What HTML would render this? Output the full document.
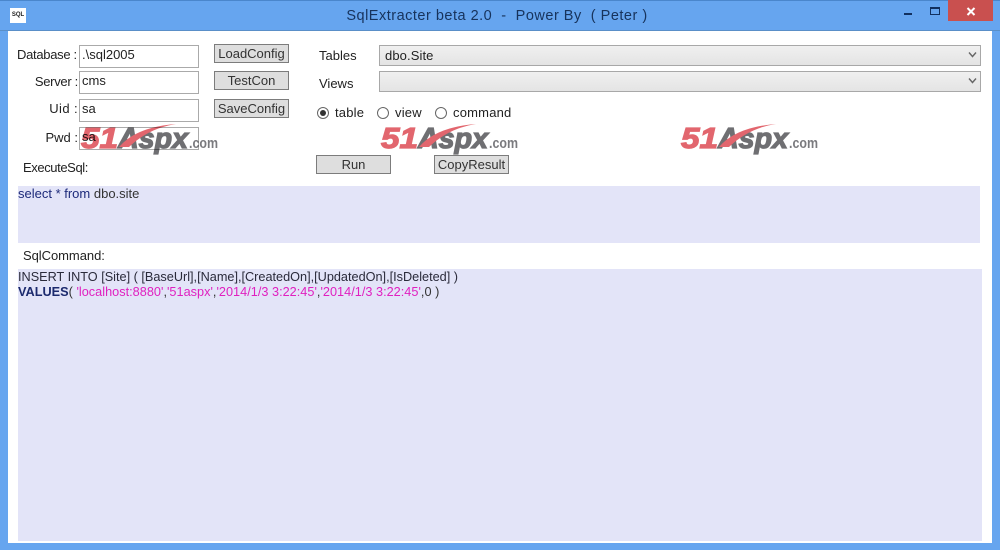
<!DOCTYPE html>
<html><head><meta charset="utf-8">
<style>
html,body{margin:0;padding:0}
body{width:1000px;height:550px;overflow:hidden;position:relative;background:#66a5ef;font-family:"Liberation Sans",sans-serif;font-size:13px;color:#222}
div,span.a{position:absolute;white-space:pre;box-sizing:border-box}
#c{left:8px;top:31px;width:984px;height:512px;background:#fff}
.l{line-height:16px;height:16px}
.r{text-align:right}
.i{left:79px;width:120px;height:23px;border:1px solid #aaa;background:#fff;padding:0 0 0 2px;line-height:17px}
.b{left:214px;width:75px;height:19px;border:1px solid #7c7c7c;background:#dedede;text-align:center;line-height:17px;color:#333}
.s{left:379px;width:602px;height:21px;border:1px solid #a8a8a8;background:linear-gradient(#f0f0f0,#e4e4e4);padding-left:5px;line-height:19px}
.o{width:12px;height:12px;border:1px solid #666;border-radius:50%;background:#fff}
.p{background:#e3e4f8}
svg{position:absolute}
</style></head><body>
<div style="left:0;top:0;width:1000px;height:1px;background:#4a86cc"></div>
<div style="left:0;top:30px;width:1000px;height:1px;background:#5a8fc8"></div>
<div id="c"></div>
<div style="left:10px;top:8px;width:16px;height:15px;background:#fff;font-size:6px;line-height:15px;text-align:center;font-weight:bold;color:#222">SQL</div>
<div style="left:0;top:7px;width:994px;text-align:center;font-size:14.5px;line-height:18px;color:#17335c;letter-spacing:.5px">SqlExtracter beta 2.0  -  Power By  ( Peter )</div>
<div style="left:904px;top:13px;width:8px;height:2px;background:#12305f"></div>
<div style="left:930px;top:7px;width:10px;height:8px;border:1px solid #12305f;border-top-width:2px"></div>
<div style="left:948px;top:0;width:45px;height:21px;background:#c9504f"></div>
<svg style="left:966px;top:7px" width="10" height="9" viewBox="0 0 10 9"><path d="M1.5 1L8.5 8M8.5 1L1.5 8" stroke="#fff" stroke-width="2"/></svg>

<div class="l" style="left:17px;top:47px;letter-spacing:-.3px">Database :</div>
<div class="l r" style="left:17px;top:74px;width:61px;letter-spacing:-.3px">Server :</div>
<div class="l r" style="left:17px;top:101px;width:61px;letter-spacing:.4px">Uid :</div>
<div class="l r" style="left:17px;top:130px;width:61px">Pwd :</div>
<div class="l" style="left:23px;top:160px;letter-spacing:-.4px">ExecuteSql:</div>
<div class="l" style="left:23px;top:248px;letter-spacing:-.05px">SqlCommand:</div>

<div class="i" style="top:45px">.\sql2005</div>
<div class="i" style="top:71px">cms</div>
<div class="i" style="top:99px">sa</div>
<div class="i" style="top:127px">sa</div>

<div class="b" style="top:44px">LoadConfig</div>
<div class="b" style="top:71px">TestCon</div>
<div class="b" style="top:99px">SaveConfig</div>

<div class="l" style="left:319px;top:48px">Tables</div>
<div class="l" style="left:319px;top:76px">Views</div>
<div class="s" style="top:45px;letter-spacing:.1px">dbo.Site</div>
<div class="s" style="top:71px"></div>
<svg style="left:968px;top:51px" width="9" height="7" viewBox="0 0 9 7"><path d="M1 1.5L4.5 5.5L8 1.5" fill="none" stroke="#666" stroke-width="1.4"/></svg>
<svg style="left:968px;top:77px" width="9" height="7" viewBox="0 0 9 7"><path d="M1 1.5L4.5 5.5L8 1.5" fill="none" stroke="#666" stroke-width="1.4"/></svg>

<div class="o" style="left:317px;top:107px"></div>
<div style="left:320px;top:110px;width:6px;height:6px;border-radius:50%;background:#333"></div>
<div class="l" style="left:335px;top:105px;letter-spacing:.2px">table</div>
<div class="o" style="left:377px;top:107px"></div>
<div class="l" style="left:395px;top:105px;letter-spacing:.2px">view</div>
<div class="o" style="left:435px;top:107px"></div>
<div class="l" style="left:453px;top:105px;letter-spacing:.2px">command</div>

<div class="b" style="left:316px;top:155px">Run</div>
<div class="b" style="left:434px;top:155px">CopyResult</div>

<div class="p" style="left:18px;top:186px;width:962px;height:57px"></div>
<div class="l" style="left:18px;top:186px;color:#1d2a7a">select * from <span style="color:#333">dbo.site</span></div>
<div class="p" style="left:18px;top:269px;width:964px;height:272px"></div>
<div class="l" style="left:18px;top:269px;font-size:12.7px;color:#2a2a3a">INSERT INTO [Site] ( [BaseUrl],[Name],[CreatedOn],[UpdatedOn],[IsDeleted] )</div>
<div class="l" style="left:18px;top:284px;font-size:12.7px;letter-spacing:.02px;color:#333"><b style="color:#1c2a6e">VALUES</b>( <span style="color:#e020c0">'localhost:8880'</span>,<span style="color:#e020c0">'51aspx'</span>,<span style="color:#e020c0">'2014/1/3 3:22:45'</span>,<span style="color:#e020c0">'2014/1/3 3:22:45'</span>,0 )</div>

<svg style="left:0;top:0;pointer-events:none;mix-blend-mode:multiply" width="1000" height="550" font-family="Liberation Sans, sans-serif" font-weight="bold">
<defs><g id="lg">
<text x="0" y="23" font-size="29" font-style="italic" fill="#e2666e" stroke="#e2666e" stroke-width="1.2" textLength="37" lengthAdjust="spacingAndGlyphs">51</text>
<text x="37" y="23" font-size="29" font-style="italic" fill="#6f6f72" stroke="#6f6f72" stroke-width="1.3" textLength="70" lengthAdjust="spacingAndGlyphs">Aspx</text>
<text x="108" y="23" font-size="15" fill="#7a7a7e" textLength="29" lengthAdjust="spacingAndGlyphs">.com</text>
<path d="M38 22Q55 2 95 -1Q68 3 48 22Z" fill="#e2666e"/>
</g></defs>
<use href="#lg" x="81" y="125"/>
<use href="#lg" x="381" y="125"/>
<use href="#lg" x="681" y="125"/>
</svg>
</body></html>
